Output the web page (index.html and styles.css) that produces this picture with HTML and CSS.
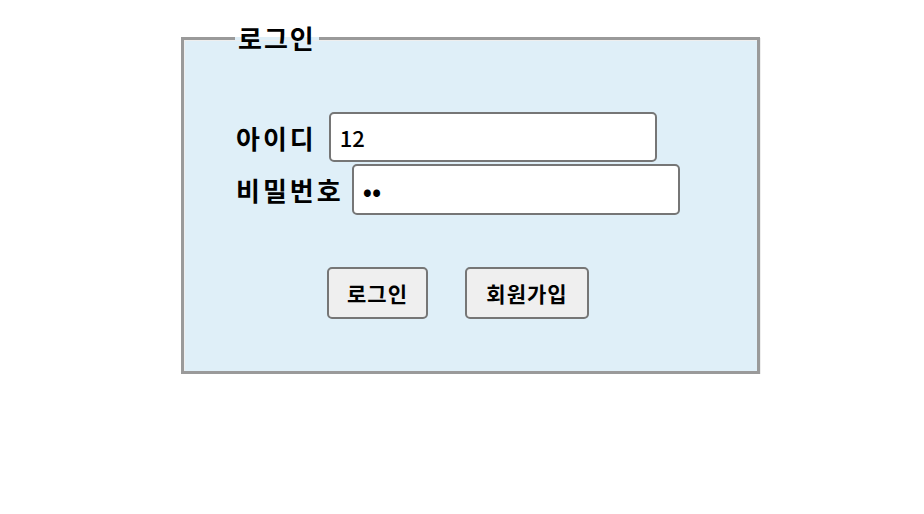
FILE: index.html
```html
<!DOCTYPE html>
<html lang="ko">
  <head>
    <meta charset="UTF-8" />
    <title>로그인</title>
    <link rel="stylesheet" href="styles.css">
  </head>
  <body>
    <form class="login-form">
      <fieldset class="login-box">
        <legend>로그인</legend>

        <div class="form-rows">
          <div class="form-row">
            <label for="user-id">아이디</label>
            <input type="text" id="user-id" name="user_id" value="12" />
          </div>
          <div class="form-row">
            <label for="user-pw">비밀번호</label>
            <input type="password" id="user-pw" name="user_pw" value="12" />
          </div>
        </div>

        <div class="button-row">
          <button type="submit" class="btn btn-login">로그인</button>
          <button type="button" class="btn btn-join">회원가입</button>
        </div>
      </fieldset>
    </form>
  </body>
</html>
```

FILE: styles.css
```css
* {
  box-sizing: border-box;
}

body {
  margin: 0;
  background: #ffffff;
  font-family: "Noto Sans CJK KR", "Noto Sans", sans-serif;
  color: #000000;
}

.login-form {
  padding: 23px 0 0 181px;
}

/* groove-like frame: dark outside top/left, dark inside bottom/right */
.login-box {
  width: 579px;
  height: 351px;
  margin: 0;
  padding: 0;
  border: 3px solid #9a9a9a;
  background-color: #dfeff8;
  box-shadow: inset 1px 1px 0 #eeeeee, 1px 1px 0 #eeeeee;
}

.login-box legend {
  margin-left: 51px;
  padding: 0 3px;
  font-size: 26px;
  font-weight: 700;
  letter-spacing: 2px;
  line-height: 30px;
}

.form-rows {
  display: flex;
  flex-direction: column;
  gap: 2px;
  padding: 59px 0 0 52px;
}

.form-row {
  display: flex;
  align-items: center;
  gap: 8px;
}

.form-row label {
  font-size: 26px;
  font-weight: 700;
  letter-spacing: 3px;
}

.form-row input {
  width: 328px;
  height: 50px;
  padding: 0 9px;
  border: 2px solid #767676;
  border-radius: 5px;
  background: #ffffff;
  font-family: inherit;
  font-size: 22px;
  font-weight: 500;
  color: #000000;
}

.form-row:first-child input {
  margin-left: 4px;
}

.form-row + .form-row input {
  height: 51px;
}

.form-row input[type="password"] {
  font-size: 26px;
}

.button-row {
  display: flex;
  gap: 37px;
  padding: 52px 0 0 143px;
}

.btn {
  height: 52px;
  padding: 0;
  border: 2px solid #767676;
  border-radius: 5px;
  background-color: #efefef;
  font-family: inherit;
  font-size: 21px;
  font-weight: 700;
  letter-spacing: 1px;
  color: #000000;
  cursor: pointer;
}

.btn-login {
  width: 101px;
}

.btn-join {
  width: 124px;
}
```
